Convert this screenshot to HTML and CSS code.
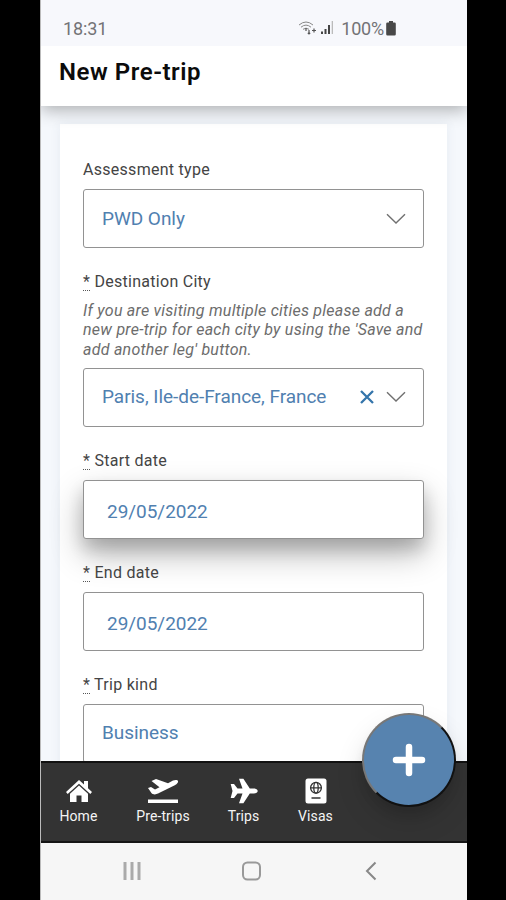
FILE: index.html
```html
<!DOCTYPE html>
<html lang="en">
<head>
<meta charset="utf-8">
<title>New Pre-trip</title>
<link rel="stylesheet" href="styles.css">
</head>
<body>
<div class="phone">
  <div class="status">
    <span class="clock">18:31</span>
    <div class="indicators">
      <svg class="wifi" width="20" height="16" viewBox="0 0 20 16" fill="none" stroke="#888" stroke-width="1">
        <path d="M1 5Q8-1 15 5M3 7.2Q8 3 13 7.2M5 9.3Q8 7 11 9.3"/>
        <path d="M8 8v3M11 10v4M9.800 12.800L11 14l1.200-1.200M16 8.500v4M14 10.500h4" stroke="#555" stroke-width="1.200"/>
      </svg>
      <svg class="signal" width="14" height="14" viewBox="0 0 14 14">
        <path d="M1 10.500h2V13H1zM4.500 8h2v5h-2zM8 4h2v9H8z" fill="#444"/><path d="M11.700 0h1.300v13h-1.300z" fill="#bbb"/>
      </svg>
      <span class="percent">100%</span>
      <svg class="battery" width="10" height="15" viewBox="0 0 10 15"><path d="M3 0h4v1.500h1.500q1.300 0 1.300 1.300v10.400q0 1.300-1.300 1.300h-7Q.2 14.500.2 13.200V2.800Q.2 1.500 1.500 1.500H3z" fill="#484848"/></svg>
    </div>
  </div>
  <header class="header"><h1>New Pre-trip</h1></header>
  <main class="content">
    <form class="card">
      <div class="field">
        <label class="label">Assessment type</label>
        <div class="box"><span class="value">PWD Only</span>
          <svg class="chevron" width="20" height="12" viewBox="0 0 20 12"><path d="M1 1.300L10 10L19 1.300"/></svg>
        </div>
      </div>
      <div class="field">
        <label class="label"><abbr class="req" title="required">*</abbr> Destination City</label>
        <p class="help">If you are visiting multiple cities please add a<br>new pre-trip for each city by using the 'Save and<br>add another leg' button.</p>
        <div class="box city"><span class="value">Paris, Ile-de-France, France</span>
          <svg class="clear" width="14" height="14" viewBox="0 0 14 14"><path d="M1 1L13 13M13 1L1 13"/></svg>
          <svg class="chevron" width="20" height="12" viewBox="0 0 20 12"><path d="M1 1.300L10 10L19 1.300"/></svg>
        </div>
      </div>
      <div class="field">
        <label class="label"><abbr class="req" title="required">*</abbr> Start date</label>
        <div class="box date focused"><span class="value">29/05/2022</span></div>
      </div>
      <div class="field">
        <label class="label"><abbr class="req" title="required">*</abbr> End date</label>
        <div class="box date plain"><span class="value">29/05/2022</span></div>
      </div>
      <div class="field">
        <label class="label"><abbr class="req" title="required">*</abbr> Trip kind</label>
        <div class="box kind"><span class="value">Business</span></div>
      </div>
    </form>
  </main>
  <nav class="tabs">
    <a class="tab"><svg width="28" height="24" viewBox="0 0 28 24"><path d="M1 13L14 1l5 4.600V2h4v7.300L27 13l-1.700 1.900L14 4.700 2.700 14.900z"/><path d="M5 14.700L14 6.600l9 8.100V23h-6.500v-6.500h-5V23H5z"/></svg><span>Home</span></a>
    <a class="tab"><svg width="32" height="26" viewBox="0 0 32 26"><path d="M1 21.500h30V25H1z"/><path d="M1 10l3-1 4 2.500 4.500-2.300L4.500 3 9 1l12 4.200 5-2.600c2.400-1 4.600-.6 5 .4.500 1.200-.8 3-3.200 4.300L11 15.600c-2 1-5 1.300-6.600-.6z"/></svg><span>Pre-trips</span></a>
    <a class="tab"><svg width="28" height="26" viewBox="0 0 28 26"><path d="M.7 6H4l3.500 4.500h5L9 .7h4.400l6.400 9.800H24c2 0 3.700 1.300 3.700 2.500S26 15.500 24 15.500h-4.200L13.400 25.300H9l3.500-9.800h-5L4 20H.7l1.800-7z"/></svg><span>Trips</span></a>
    <a class="tab"><svg width="22" height="26" viewBox="0 0 22 26"><rect x=".5" y=".5" width="21" height="25" rx="2.500"/><g fill="none" stroke="#333" stroke-width="1.300"><circle cx="11" cy="9.800" r="5.400"/><ellipse cx="11" cy="9.800" rx="2.200" ry="5.400"/><path d="M5.600 9.800h10.800M6.500 20h9"/></g></svg><span>Visas</span></a>
  </nav>
  <div class="system">
    <svg width="426" height="57" viewBox="0 0 426 57" fill="none">
      <path d="M84 19v18M91 19v18M98 19v18" stroke="#aaa" stroke-width="3"/>
      <rect x="202" y="19.500" width="17" height="17" rx="4.500" stroke="#999" stroke-width="2"/>
      <path d="M334.500 19.500L326 28L334.500 36.500" stroke="#888" stroke-width="2"/>
    </svg>
  </div>
  <button class="add" type="button" aria-label="Add"><svg width="34" height="34" viewBox="0 0 34 34"><path d="M17 4v26M4 17h26" stroke="#fff" stroke-width="6.500" stroke-linecap="round"/></svg></button>
</div>
</body>
</html>
```
FILE: styles.css
```css
* { box-sizing: border-box; }
body { margin: 0; background: #000; font-family: Roboto, sans-serif; overflow: hidden; }
.phone { position: relative; width: 427px; height: 900px; margin-left: 40px; display: flex; flex-direction: column; background: #f5f8fc; overflow: hidden; border-left: 1px solid #bbb; }
.status { flex: none; height: 46px; padding: 10px 71px 0 22px; display: flex; justify-content: space-between; align-items: center; color: #737376; font-size: 18px; background: #f7f8fc; }
.clock { letter-spacing: -.1px; }
.indicators { display: flex; align-items: center; }
.signal { margin-left: 2px; margin-right: 7px; }
.percent { letter-spacing: -.2px; }
.battery { margin-left: 2px; }
.header { flex: none; position: relative; z-index: 2; height: 60px; padding-left: 18px; display: flex; align-items: center; background: #fff; box-shadow: 0 4px 16px rgba(0,0,0,.3); clip-path: inset(0 0 -24px 0); }
h1 { margin: -8px 0 0; font-size: 24px; line-height: 30px; font-weight: 600; letter-spacing: .55px; color: #0b0b0b; }
.content { flex: 1; min-height: 0; overflow: hidden; padding: 18px 20px 0 19px; }
.card { height: 760px; padding: 36px 23px 0; background: #fff; box-shadow: 0 0 10px rgba(80,100,130,.09); }
.field { margin-bottom: 23.800px; }
.label { display: block; height: 19px; margin-bottom: 10px; font-size: 16px; line-height: 19px; letter-spacing: .28px; color: #444; white-space: nowrap; }
.req { display: inline-block; height: 19px; text-decoration: none; border-bottom: 1px dotted #555; }
.help { margin: 0 0 9.500px; height: 58px; font-size: 16px; line-height: 19.400px; font-style: italic; color: #6c6c6c; white-space: nowrap; letter-spacing: .25px; }
.box { height: 59px; border: 1px solid #929292; border-radius: 3px; padding: 0 17px 0 18px; display: flex; align-items: center; background: #fff; }
.value { flex: 1; font-size: 19px; line-height: 24px; letter-spacing: -.04px; color: #5080b0; white-space: nowrap; }
.city .value { padding-bottom: 2px; }
.city svg { position: relative; top: -1px; }
.date { padding-left: 23px; }
.date .value { padding-top: 5px; }
.plain { background: none; }
.focused { box-shadow: 0 15px 32px rgba(0,0,0,.29), 0 10px 16px rgba(0,0,0,.14); }
.chevron path { fill: none; stroke: #707070; stroke-width: 1.400; }
.clear { margin-right: 12px; }
.clear path { fill: none; stroke: #3475ab; stroke-width: 2.300; }
.tabs { flex: none; height: 82px; border-top: 2px solid #111; border-bottom: 2px solid #151515; background: #333; display: grid; grid-template-columns: 75px 94px 67px 77px; color: #f5f5f5; }
.tab { display: flex; flex-direction: column; align-items: center; padding-top: 15px; font-size: 14px; line-height: 18px; letter-spacing: .1px; }
.tab svg { fill: #fff; height: 26px; margin-bottom: 3px; }
.system { flex: none; height: 57px; background: #f6f6f6; }
.system svg { display: block; }
.add { position: absolute; z-index: 3; left: 321px; top: 713px; width: 94px; height: 94px; padding: 0; border-radius: 50%; border: 2px solid; border-color: #777 #111 #111 #777; background: #5783af; display: flex; align-items: center; justify-content: center; box-shadow: 0 14px 28px rgba(0,0,0,.13), 0 8px 10px rgba(0,0,0,.08); }
```
